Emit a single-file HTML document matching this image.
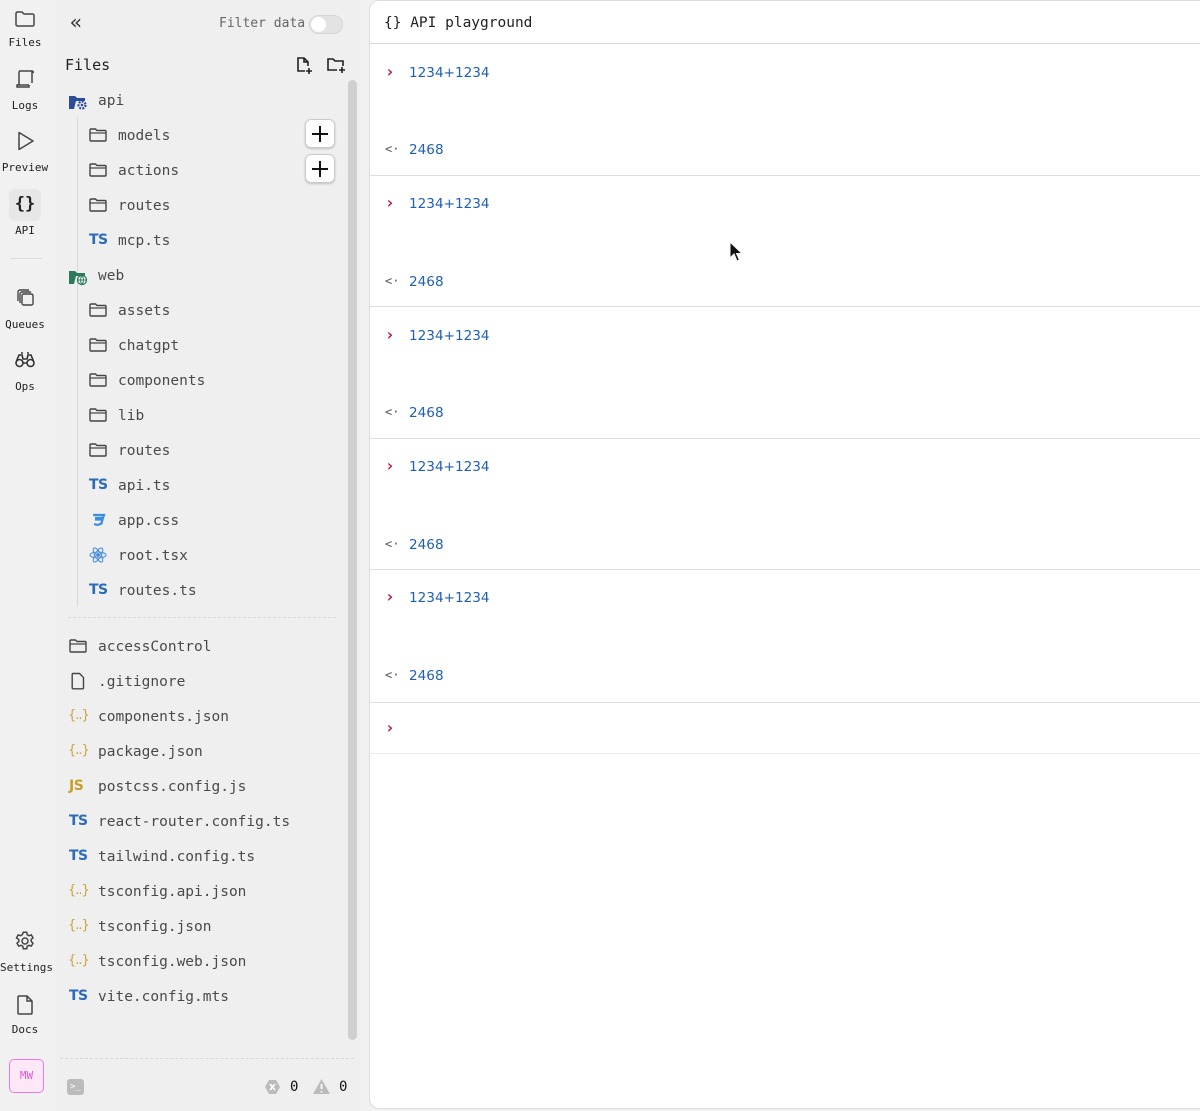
<!DOCTYPE html>
<html><head><meta charset="utf-8"><style>
*{margin:0;padding:0;box-sizing:border-box}
body{width:1200px;height:1111px;overflow:hidden;background:#f1f1f1;position:relative;font-family:"DejaVu Sans Mono","Liberation Mono",monospace;color:#333}
.a{position:absolute}
.rl{position:absolute;left:0;width:50px;text-align:center;font-size:11px;color:#222}
.ri{position:absolute;left:13px;width:24px;height:24px}
.row{position:absolute;height:20px;line-height:20px;font-size:14.5px;color:#4a4a4a;white-space:nowrap;margin-top:2px}
.ic{position:absolute;width:20px;height:20px;margin-top:1px}
.ts{position:absolute;font-family:"DejaVu Sans","Liberation Sans",sans-serif;font-weight:bold;font-size:14px;color:#2c6bb8;line-height:20px;letter-spacing:-0.5px;margin-top:1px}
.js{color:#c5a128}
.br{position:absolute;font-family:"DejaVu Sans",sans-serif;font-size:13px;color:#c9a43a;line-height:20px;letter-spacing:-1px;margin-top:1px}
.pm{position:absolute;left:305px;width:30px;height:29px;border:1px solid #ccc;border-radius:6px;background:#fff;box-shadow:0 1px 2px rgba(0,0,0,.2)}
.pr{position:absolute;left:385px;font-size:16px;font-weight:bold;color:#c8102e;line-height:20px;margin-top:1px}
.bl{position:absolute;left:409px;font-size:13.6px;color:#1f5fb5;line-height:20px;font-family:"DejaVu Sans",sans-serif;margin-top:2px}
.rs{position:absolute;left:385px;font-size:12px;color:#555;line-height:20px;margin-top:1px}
.hr{position:absolute;left:370px;right:0;height:1px;background:#dedede}
</style></head><body>
<!-- left rail -->
<svg class="ri" style="top:7px" viewBox="0 0 24 24" fill="none" stroke="#444" stroke-width="1.5"><path d="M3 6.5a1.5 1.5 0 0 1 1.5-1.5h4.5l2 2h8.5a1.5 1.5 0 0 1 1.5 1.5v9a1.5 1.5 0 0 1-1.5 1.5h-15A1.5 1.5 0 0 1 3 17.5z"/></svg>
<div class="rl" style="top:36px">Files</div>
<svg class="ri" style="top:67px" viewBox="0 0 24 24" fill="none" stroke="#444" stroke-width="1.5"><path d="M7 4h12v12M7 4c-1 0-1 1-1 2v12H4v2h12v-2M19 4c1 0 1.5 1 1 2"/><path d="M6 18h10"/></svg>
<div class="rl" style="top:99px">Logs</div>
<svg class="ri" style="top:129px" viewBox="0 0 24 24" fill="none" stroke="#444" stroke-width="1.5"><path d="M6 3.5l14 8.5-14 8.5z" stroke-linejoin="round"/></svg>
<div class="rl" style="top:161px">Preview</div>
<div class="a" style="left:9px;top:189px;width:32px;height:32px;background:#e7e7e7;border-radius:6px"></div>
<div class="a" style="left:9px;top:194px;width:32px;text-align:center;font-size:17px;font-weight:bold;color:#222">{}</div>
<div class="rl" style="top:224px">API</div>
<div class="a" style="left:10px;top:258px;width:32px;height:1px;background:#ddd"></div>
<svg class="ri" style="top:286px" viewBox="0 0 24 24" fill="none" stroke="#444" stroke-width="1.4"><rect x="9" y="8" width="11" height="11" rx="1.5"/><path d="M7 17V8a2 2 0 0 1 2-2h9M5 15V6a2 2 0 0 1 2-2h9"/></svg>
<div class="rl" style="top:318px">Queues</div>
<svg class="ri" style="top:348px" viewBox="0 0 24 24" fill="none" stroke="#333" stroke-width="1.6"><circle cx="6.5" cy="15" r="3.5"/><circle cx="17.5" cy="15" r="3.5"/><path d="M3.5 13l2.5-6h3l1 4h4l1-4h3l2.5 6M10 15h4M8 5h2M14 5h2"/></svg>
<div class="rl" style="top:380px">Ops</div>
<svg class="ri" style="top:929px" viewBox="0 0 24 24" fill="none" stroke="#444" stroke-width="1.5"><circle cx="12" cy="12" r="3"/><path d="M10.3 3.3h3.4l.5 2.4 1.8 1 2.3-.8 1.7 3-1.8 1.6v2l1.8 1.6-1.7 3-2.3-.8-1.8 1-.5 2.4h-3.4l-.5-2.4-1.8-1-2.3.8-1.7-3 1.8-1.6v-2L3.5 8.9l1.7-3 2.3.8 1.8-1z"/></svg>
<div class="rl" style="top:961px">Settings</div>
<svg class="ri" style="top:993px" viewBox="0 0 24 24" fill="none" stroke="#444" stroke-width="1.5"><path d="M6 3h8l5 5v12a1 1 0 0 1-1 1H6a1 1 0 0 1-1-1V4a1 1 0 0 1 1-1z"/><path d="M14 3v5h5"/></svg>
<div class="rl" style="top:1023px">Docs</div>
<div class="a" style="left:9px;top:1059px;width:35px;height:34px;border:1.5px solid #f07ae0;border-radius:5px;background:#fde8f8;color:#e455d0;font-size:11px;text-align:center;line-height:31px">MW</div>

<!-- sidebar -->
<div class="a" style="left:57px;top:0;width:304px;height:1111px;background:#efefef"></div>
<div class="a" style="left:70px;top:12px;font-size:20px;color:#333;line-height:20px">«</div>
<div class="a" style="left:219px;top:16px;font-size:13px;color:#666">Filter data</div>
<div class="a" style="left:309px;top:15px;width:34px;height:19px;border-radius:10px;background:#e3e3e3;border:1px solid #d6d6d6"></div>
<div class="a" style="left:311px;top:17px;width:15px;height:15px;border-radius:50%;background:#fff"></div>
<div class="a" style="left:65px;top:56px;font-size:15px;color:#222">Files</div>
<svg class="a" style="left:294px;top:55px" width="20" height="20" viewBox="0 0 20 20" fill="none" stroke="#222" stroke-width="1.6"><path d="M11 16H4V3h6l4 4v4M10 3v4h4M15 13v6M12 16h6"/></svg>
<svg class="a" style="left:325px;top:55px" width="22" height="20" viewBox="0 0 22 20" fill="none" stroke="#222" stroke-width="1.6"><path d="M12 15H3V4h5l2 2h8v5M17 12v6M14 15h6"/></svg>
<div class="a" style="left:348px;top:80px;width:9px;height:960px;border-radius:5px;background:#cfcfcf"></div>
<div class="a" style="left:77px;top:117px;width:1px;height:490px;background:#d8d8d8"></div>
<div class="a" style="left:68px;top:617px;width:268px;border-top:1px dashed #d8d8d8"></div>
<div class="a" style="left:60px;top:1058px;width:294px;border-top:1px dashed #d8d8d8"></div>

<div class="pm" style="top:119px"><div class="a" style="left:6px;top:13px;width:16px;height:2px;background:#111"></div><div class="a" style="left:13px;top:6px;width:2px;height:16px;background:#111"></div></div>
<div class="pm" style="top:154px"><div class="a" style="left:6px;top:13px;width:16px;height:2px;background:#111"></div><div class="a" style="left:13px;top:6px;width:2px;height:16px;background:#111"></div></div>

<svg class="ic" style="left:68px;top:91px" viewBox="0 0 20 20"><path d="M1 4h6l2 2h8v3H8l-2 8H1z" fill="#2b4d9a"/><circle cx="14" cy="13" r="3.5" fill="none" stroke="#2b4d9a" stroke-width="2.2" stroke-dasharray="2 1.2"/><circle cx="14" cy="13" r="1.3" fill="#2b4d9a"/></svg>
<svg class="ic" style="left:68px;top:266px" viewBox="0 0 20 20"><path d="M1 4h6l2 2h8v3H8l-2 8H1z" fill="#2d7a5a"/><circle cx="14" cy="13" r="4.5" fill="#fff" stroke="#2d7a5a" stroke-width="1.3"/><path d="M9.5 13h9M14 8.5c-2 3-2 6 0 9M14 8.5c2 3 2 6 0 9" stroke="#2d7a5a" stroke-width="1" fill="none"/></svg>

<svg width="0" height="0" style="position:absolute"><defs><symbol id="fd" viewBox="0 0 20 20"><path d="M2 5a1 1 0 0 1 1-1h4.5l1.5 1.5h8a1 1 0 0 1 1 1V15a1 1 0 0 1-1 1H3a1 1 0 0 1-1-1z" fill="none" stroke="#444" stroke-width="1.4"/><path d="M2 8h16" stroke="#444" stroke-width="1.2"/></symbol></defs></svg>
<svg class="ic" style="left:88px;top:124px"><use href="#fd"/></svg><div class="row" style="left:118px;top:124px">models</div>
<svg class="ic" style="left:88px;top:159px"><use href="#fd"/></svg><div class="row" style="left:118px;top:159px">actions</div>
<svg class="ic" style="left:88px;top:194px"><use href="#fd"/></svg><div class="row" style="left:118px;top:194px">routes</div>
<div class="ts" style="left:89px;top:229px">TS</div><div class="row" style="left:118px;top:229px">mcp.ts</div>
<div class="row" style="left:98px;top:89px">api</div>
<div class="row" style="left:98px;top:264px">web</div>
<svg class="ic" style="left:88px;top:299px"><use href="#fd"/></svg><div class="row" style="left:118px;top:299px">assets</div>
<svg class="ic" style="left:88px;top:334px"><use href="#fd"/></svg><div class="row" style="left:118px;top:334px">chatgpt</div>
<svg class="ic" style="left:88px;top:369px"><use href="#fd"/></svg><div class="row" style="left:118px;top:369px">components</div>
<svg class="ic" style="left:88px;top:404px"><use href="#fd"/></svg><div class="row" style="left:118px;top:404px">lib</div>
<svg class="ic" style="left:88px;top:439px"><use href="#fd"/></svg><div class="row" style="left:118px;top:439px">routes</div>
<div class="ts" style="left:89px;top:474px">TS</div><div class="row" style="left:118px;top:474px">api.ts</div>
<svg class="ic" style="left:88px;top:509px" viewBox="0 0 20 20"><path d="M5 5h11l-1 3H7M7 9.5h7.5l-1 4L9.5 15l-3.5-1" fill="none" stroke="#3c8ce0" stroke-width="2.2"/></svg><div class="row" style="left:118px;top:509px">app.css</div>
<svg class="ic" style="left:88px;top:544px" viewBox="0 0 20 20" fill="none" stroke="#4a8fd9" stroke-width="1.1"><ellipse cx="10" cy="10" rx="8" ry="3"/><ellipse cx="10" cy="10" rx="8" ry="3" transform="rotate(60 10 10)"/><ellipse cx="10" cy="10" rx="8" ry="3" transform="rotate(120 10 10)"/><circle cx="10" cy="10" r="1.4" fill="#4a8fd9"/></svg><div class="row" style="left:118px;top:544px">root.tsx</div>
<div class="ts" style="left:89px;top:579px">TS</div><div class="row" style="left:118px;top:579px">routes.ts</div>

<svg class="ic" style="left:68px;top:635px"><use href="#fd"/></svg><div class="row" style="left:98px;top:635px">accessControl</div>
<svg class="ic" style="left:68px;top:670px" viewBox="0 0 20 20" fill="none" stroke="#444" stroke-width="1.4"><path d="M5 2.5h6.5l4 4V17a.8.8 0 0 1-.8.8H5a.8.8 0 0 1-.8-.8V3.3A.8.8 0 0 1 5 2.5z"/></svg><div class="row" style="left:98px;top:670px">.gitignore</div>
<div class="br" style="left:68px;top:705px">{..}</div><div class="row" style="left:98px;top:705px">components.json</div>
<div class="br" style="left:68px;top:740px">{..}</div><div class="row" style="left:98px;top:740px">package.json</div>
<div class="ts js" style="left:69px;top:775px">JS</div><div class="row" style="left:98px;top:775px">postcss.config.js</div>
<div class="ts" style="left:69px;top:810px">TS</div><div class="row" style="left:98px;top:810px">react-router.config.ts</div>
<div class="ts" style="left:69px;top:845px">TS</div><div class="row" style="left:98px;top:845px">tailwind.config.ts</div>
<div class="br" style="left:68px;top:880px">{..}</div><div class="row" style="left:98px;top:880px">tsconfig.api.json</div>
<div class="br" style="left:68px;top:915px">{..}</div><div class="row" style="left:98px;top:915px">tsconfig.json</div>
<div class="br" style="left:68px;top:950px">{..}</div><div class="row" style="left:98px;top:950px">tsconfig.web.json</div>
<div class="ts" style="left:69px;top:985px">TS</div><div class="row" style="left:98px;top:985px">vite.config.mts</div>

<div class="a" style="left:67px;top:1079px;width:17px;height:16px;background:#bbb;border-radius:3px;color:#fff;font-size:9px;line-height:16px;padding-left:3px">&gt;_</div>
<svg class="a" style="left:264px;top:1079px" width="17" height="16" viewBox="0 0 17 16"><path d="M5 1h7l4 7-4 7H5L1 8z" fill="#bbb"/><path d="M6 5l5 6M11 5l-5 6" stroke="#fff" stroke-width="1.6"/></svg>
<div class="a" style="left:290px;top:1079px;font-size:14px;color:#111">0</div>
<svg class="a" style="left:312px;top:1078px" width="19" height="17" viewBox="0 0 19 17"><path d="M9.5 1L18 16H1z" fill="#bbb"/><path d="M9.5 6v5M9.5 13v1.5" stroke="#fff" stroke-width="1.8"/></svg>
<div class="a" style="left:339px;top:1079px;font-size:14px;color:#111">0</div>

<!-- main -->
<div class="a" style="left:369px;top:0;width:840px;height:1109px;background:#fff;border:1px solid #dcdcdc;border-radius:10px 0 0 10px"></div>
<div class="a" style="left:384px;top:13px;font-size:14.5px;color:#222;line-height:20px">{} API playground</div>
<div class="hr" style="top:43px;background:#d6d6d6"></div>

<div class="pr" style="top:61px">›</div><div class="bl" style="top:61px">1234+1234</div>
<div class="rs" style="top:138px">&lt;·</div><div class="bl" style="top:138px">2468</div>
<div class="hr" style="top:175px"></div>
<div class="pr" style="top:192px">›</div><div class="bl" style="top:192px">1234+1234</div>
<div class="rs" style="top:270px">&lt;·</div><div class="bl" style="top:270px">2468</div>
<div class="hr" style="top:306px"></div>
<div class="pr" style="top:324px">›</div><div class="bl" style="top:324px">1234+1234</div>
<div class="rs" style="top:401px">&lt;·</div><div class="bl" style="top:401px">2468</div>
<div class="hr" style="top:438px"></div>
<div class="pr" style="top:455px">›</div><div class="bl" style="top:455px">1234+1234</div>
<div class="rs" style="top:533px">&lt;·</div><div class="bl" style="top:533px">2468</div>
<div class="hr" style="top:569px"></div>
<div class="pr" style="top:586px">›</div><div class="bl" style="top:586px">1234+1234</div>
<div class="rs" style="top:664px">&lt;·</div><div class="bl" style="top:664px">2468</div>
<div class="hr" style="top:702px"></div>
<div class="pr" style="top:717px">›</div>
<div class="hr" style="top:753px;background:#ececec"></div>

<svg class="a" style="left:729px;top:241px" width="14" height="22" viewBox="0 0 14 22"><path d="M1 1v16l4-4 3 7 2.5-1-3-6.5H13z" fill="#111" stroke="#fff" stroke-width="1"/></svg>
</body></html>
